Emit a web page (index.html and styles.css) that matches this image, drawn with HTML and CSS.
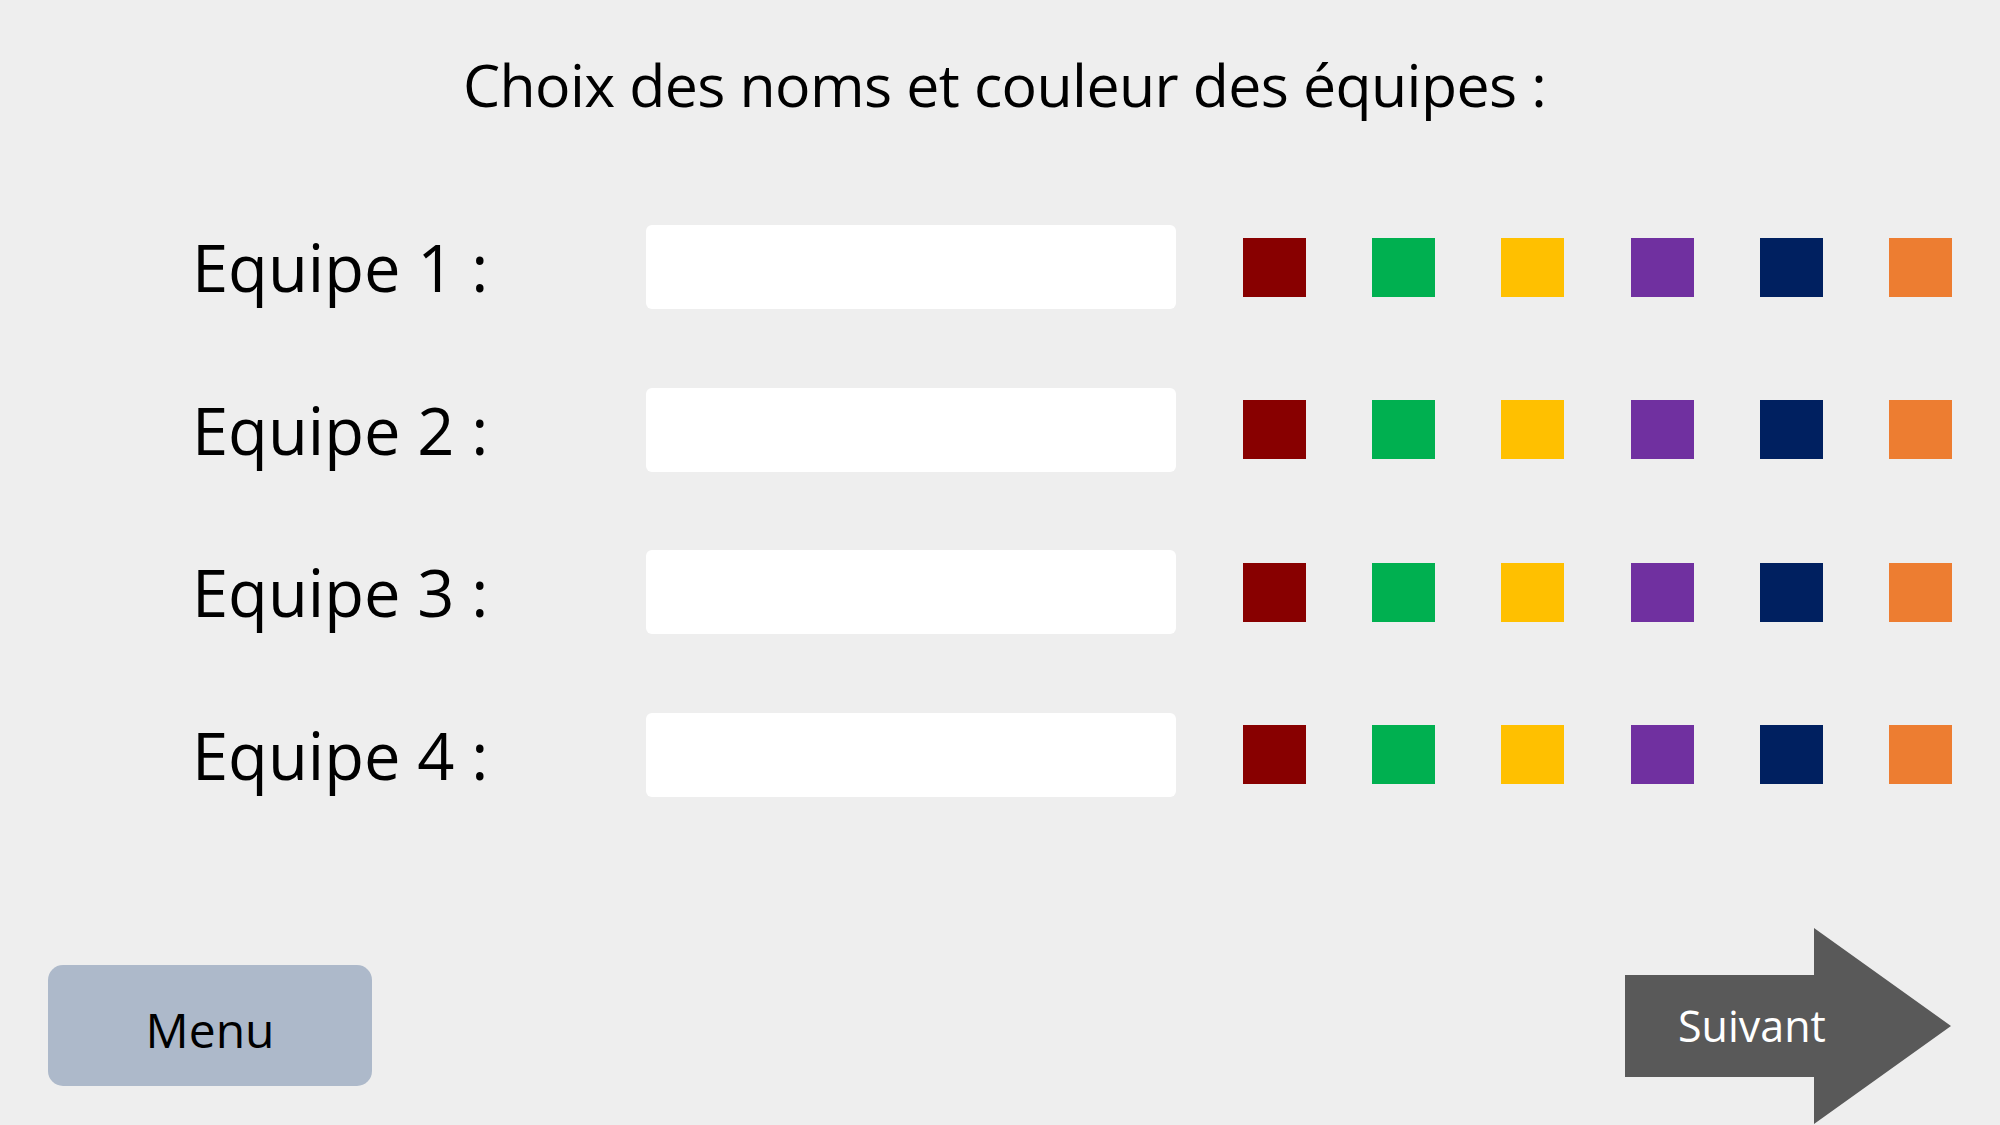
FILE: index.html
```html
<!DOCTYPE html>
<html lang="fr">
<head>
<meta charset="utf-8">
<title>Choix des équipes</title>
<link rel="stylesheet" href="styles.css">
</head>
<body>
<div class="page">
  <h1 class="title">Choix des noms et couleur des équipes :</h1>
  <div class="teams">
    <div class="team-row">
      <div class="team-label">Equipe 1 :</div>
      <div class="team-input"></div>
      <div class="swatches">
        <span class="swatch c-red"></span><span class="swatch c-green"></span><span class="swatch c-yellow"></span><span class="swatch c-purple"></span><span class="swatch c-navy"></span><span class="swatch c-orange"></span>
      </div>
    </div>
    <div class="team-row">
      <div class="team-label">Equipe 2 :</div>
      <div class="team-input"></div>
      <div class="swatches">
        <span class="swatch c-red"></span><span class="swatch c-green"></span><span class="swatch c-yellow"></span><span class="swatch c-purple"></span><span class="swatch c-navy"></span><span class="swatch c-orange"></span>
      </div>
    </div>
    <div class="team-row">
      <div class="team-label">Equipe 3 :</div>
      <div class="team-input"></div>
      <div class="swatches">
        <span class="swatch c-red"></span><span class="swatch c-green"></span><span class="swatch c-yellow"></span><span class="swatch c-purple"></span><span class="swatch c-navy"></span><span class="swatch c-orange"></span>
      </div>
    </div>
    <div class="team-row">
      <div class="team-label">Equipe 4 :</div>
      <div class="team-input"></div>
      <div class="swatches">
        <span class="swatch c-red"></span><span class="swatch c-green"></span><span class="swatch c-yellow"></span><span class="swatch c-purple"></span><span class="swatch c-navy"></span><span class="swatch c-orange"></span>
      </div>
    </div>
  </div>
  <div class="footer">
    <div class="menu-btn">Menu</div>
    <svg class="next-arrow" width="326" height="196" viewBox="0 0 326 196">
      <polygon points="0,47 189,47 189,0 326,98 189,196 189,149 0,149" fill="#595959"/>
      <text x="53" y="114" class="next-text">Suivant</text>
    </svg>
  </div>
</div>
</body>
</html>
```
FILE: styles.css
```css
html, body {
  margin: 0;
  padding: 0;
}
body {
  background: #eeeeee;
  font-family: "Open Sans", "Noto Sans", sans-serif;
  color: #000;
}
.page {
  width: 2000px;
  height: 1125px;
  overflow: hidden;
  display: flex;
  flex-direction: column;
}
.title {
  margin: 54px 0 0 0;
  padding-left: 9px;
  font-size: 59px;
  line-height: 61px;
  letter-spacing: -0.6px;
  font-weight: 400;
  text-align: center;
}
.teams {
  margin-top: 110px;
  display: flex;
  flex-direction: column;
  gap: 78.5px;
  padding-left: 192px;
}
.team-row {
  display: flex;
  align-items: center;
  height: 84px;
}
.team-label {
  width: 454px;
  font-size: 65px;
  line-height: 80px;
  white-space: nowrap;
}
.team-input {
  width: 530px;
  height: 84px;
  background: #ffffff;
  border-radius: 6px;
}
.swatches {
  display: flex;
  gap: 66.2px;
  margin-left: 67px;
}
.swatch {
  display: block;
  width: 63px;
  height: 59px;
}
.c-red { background: #880000; }
.c-green { background: #00b050; }
.c-yellow { background: #ffc000; }
.c-purple { background: #7030a0; }
.c-navy { background: #002060; }
.c-orange { background: #ed7d31; }
.footer {
  margin-top: 131px;
  display: flex;
  align-items: center;
  justify-content: space-between;
  padding: 0 49px 0 48px;
}
.menu-btn {
  width: 324px;
  height: 121px;
  background: #adb9ca;
  border-radius: 15px;
  display: flex;
  align-items: center;
  justify-content: center;
  font-size: 48px;
  padding-top: 8px;
  box-sizing: border-box;
}
.next-arrow {
  display: block;
}
.next-text {
  font-family: "Open Sans", "Noto Sans", sans-serif;
  font-size: 43px;
  fill: #ffffff;
}
```
